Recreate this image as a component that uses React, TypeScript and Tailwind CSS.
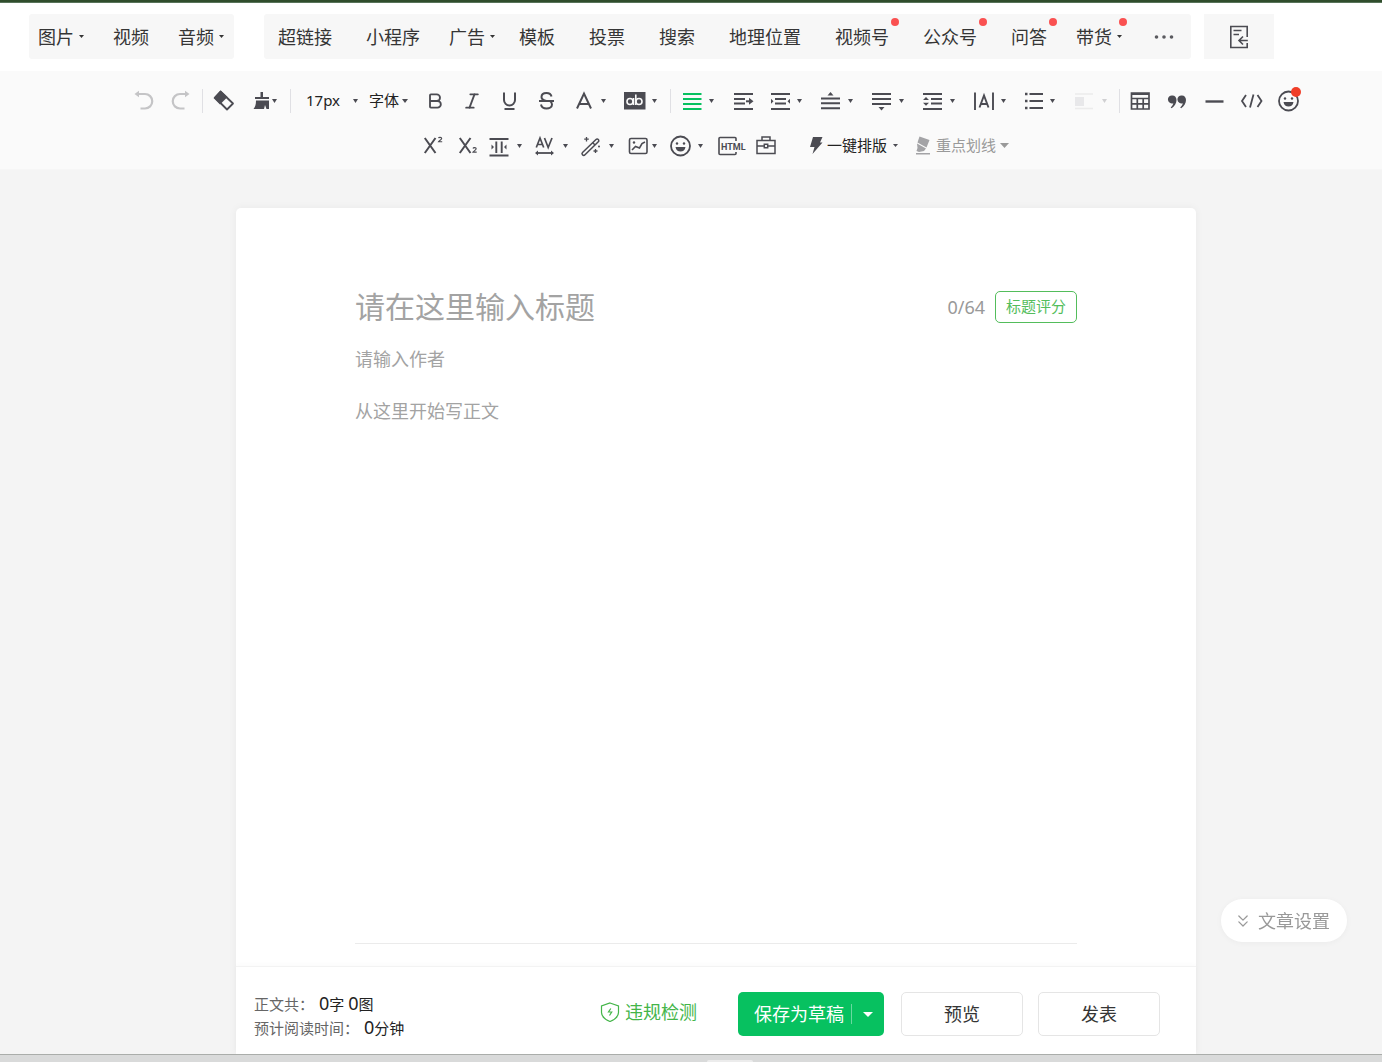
import { Bold, ChevronsDown, Italic, Strikethrough, Underline } from "lucide-react";
import { useState, type ReactNode } from "react";

interface MenuItem {
  label: string;
  className: string;
  caret?: boolean;
  dot?: boolean;
}

const mediaMenu: MenuItem[] = [
  { label: "图片", className: "pr-[39px]", caret: true },
  { label: "视频", className: "pr-[29px]" },
  { label: "音频", className: "pr-[20px]", caret: true },
];

const insertMenu: MenuItem[] = [
  { label: "超链接", className: "pr-[34px]" },
  { label: "小程序", className: "pr-[29px]" },
  { label: "广告", className: "pr-[34px]", caret: true },
  { label: "模板", className: "pr-[34px]" },
  { label: "投票", className: "pr-[34px]" },
  { label: "搜索", className: "pr-[34px]" },
  { label: "地理位置", className: "pr-[34px]" },
  { label: "视频号", className: "pr-[34px]", dot: true },
  { label: "公众号", className: "pr-[34px]", dot: true },
  { label: "问答", className: "pr-[29px]", dot: true },
  { label: "带货", className: "pr-[42px]", caret: true, dot: true },
];

function Caret({ className = "h-1 w-[5px]" }: { className?: string }) {
  return (
    <svg viewBox="0 0 10 8" preserveAspectRatio="none" className={`block shrink-0 ${className}`} fill="currentColor">
      <path d="M0 0h10L5 8z" />
    </svg>
  );
}

function MenuButton({ item }: { item: MenuItem }) {
  return (
    <button className={`h-full text-lg text-[#353535] ${item.className}`}>
      <span className="relative block whitespace-nowrap">
        {item.label}
        {item.caret && (
          <span className="absolute inset-y-0 left-full ml-[5px] flex items-center">
            <Caret className="h-[3px] w-[5px]" />
          </span>
        )}
        {item.dot && (
          <span
            className={`absolute left-full -top-[5px] size-2 rounded-full bg-[#fa5151] ${item.caret ? "ml-[7px]" : "ml-[2px]"}`}
          />
        )}
      </span>
    </button>
  );
}

function Icon({ children }: { children: ReactNode }) {
  return (
    <svg viewBox="0 0 24 24" className="size-6 shrink-0" fill="none" stroke="currentColor" strokeWidth="2">
      {children}
    </svg>
  );
}

interface ToolProps {
  title: string;
  width?: string;
  caret?: string;
  color?: string;
  children: ReactNode;
}

function Tool({ title, width = "w-[37px]", caret, color = "text-[#4b4b52]", children }: ToolProps) {
  return (
    <button title={title} aria-label={title} className={`relative flex h-11 shrink-0 items-center pl-1.5 ${width} ${color}`}>
      {children}
      {caret && (
        <span className={`${caret} ${color === "text-[#07c160]" ? "text-[#4b4b52]" : ""}`}>
          <Caret />
        </span>
      )}
    </button>
  );
}

function Divider() {
  return <span className="ml-[3px] mr-[2px] h-6 w-px shrink-0 bg-[#e0e0e4]" />;
}

function Smile() {
  return (
    <Icon>
      <circle cx="12.5" cy="12" r="9.5" strokeWidth="1.8" />
      <circle cx="9" cy="9.5" r="1.2" fill="currentColor" stroke="none" />
      <circle cx="16" cy="9.5" r="1.2" fill="currentColor" stroke="none" />
      <path d="M7.500 13h10c-.4 3-2.400 4.500-5 4.500s-4.600-1.500-5-4.500z" fill="currentColor" stroke="none" />
    </Icon>
  );
}

function TopMenu() {
  return (
    <nav className="flex bg-white pb-3 pl-[29px] pt-[11px]">
      <div className="flex h-[45px] shrink-0 items-center rounded-[3px] bg-[#f7f7f7] pl-[9px]">
        {mediaMenu.map((item) => (
          <MenuButton key={item.label} item={item} />
        ))}
      </div>
      <div className="ml-[30px] flex h-[45px] shrink-0 items-center rounded-[3px] bg-[#f7f7f7] pl-[14px] pr-[17px]">
        {insertMenu.map((item) => (
          <MenuButton key={item.label} item={item} />
        ))}
        <button aria-label="更多" className="h-full text-[#5a5a5f]">
          <svg viewBox="0 0 20 4" className="h-1 w-5" fill="currentColor">
            <circle cx="2.500" cy="2" r="1.800" />
            <circle cx="10" cy="2" r="1.800" />
            <circle cx="17.500" cy="2" r="1.800" />
          </svg>
        </button>
      </div>
      <button aria-label="导入文章" className="ml-[13px] flex h-[45px] w-[70px] shrink-0 items-center justify-center bg-[#f7f7f7] text-[#4b4b52]">
        <svg viewBox="0 0 20 24" className="h-6 w-5" fill="none" stroke="currentColor" strokeWidth="1.600">
          <path d="M18.200 12V1.500H1.800v21h16.400v-4.500M4.500 5.500h8M4.500 9.500h5.500M18.800 15.500h-9M14 11.500L10 15.500l4 4" />
        </svg>
      </button>
    </nav>
  );
}

function Toolbar() {
  return (
    <div className="flex flex-col items-center gap-px border-b border-[#f6f6f6] bg-[#fafafa] pl-[50px] pt-2">
      <div className="flex h-11 items-center">
        <Tool title="撤销" color="text-[#c4c4c6]">
          <Icon>
            <path d="M6 5h8a7 7 0 0 1 0 14.500H9.500" strokeWidth="2.200" />
            <path d="M3.500 5L8 1.800v6.400z" fill="currentColor" stroke="none" />
          </Icon>
        </Tool>
        <Tool title="重做" color="text-[#c4c4c6]">
          <Icon>
            <path d="M19 5h-7a7 7 0 0 0 0 14.500h4.500" strokeWidth="2.200" />
            <path d="M21.500 5L17 1.800v6.400z" fill="currentColor" stroke="none" />
          </Icon>
        </Tool>
        <Divider />
        <Tool title="清除格式">
          <Icon>
            <path d="M9.500 2.500L22 14.500l-6 6L4 8.500z" strokeWidth="1.800" strokeLinejoin="round" />
            <path d="M9.500 1.500l7 6.500-7.500 7.500-6.500-6.500z" fill="currentColor" stroke="none" />
          </Icon>
        </Tool>
        <Tool title="格式刷" width="w-[45px]">
          <Icon>
            <path d="M12.500 3h2.500v5h6v2H7V8h5.500zM8 11.500h13V20h-2.500l-1.500-4-1 4H5.500C7 18 8 16 8 11.500z" fill="currentColor" stroke="none" />
          </Icon>
          <Caret />
        </Tool>
        <Divider />
        <label className="relative flex w-[70px] shrink-0 items-center text-[#4b4b52]">
          <select aria-label="字号" className="-mt-0.5 w-full appearance-none bg-transparent pl-[13px] text-[15px] text-[#222]">
            <option>17px</option>
          </select>
          <Caret className="absolute right-[5px] h-1 w-[5px]" />
        </label>
        <label className="relative flex w-[54px] shrink-0 items-center text-[#4b4b52]">
          <select aria-label="字体" className="-mt-0.5 w-full appearance-none bg-transparent pl-[6px] text-[15px] text-[#222]">
            <option>字体</option>
          </select>
          <Caret className="absolute right-[9px] h-1 w-[6px]" />
        </label>
        <Tool title="加粗">
          <span className="flex w-6 justify-center"><Bold size={20} strokeWidth={2.2} /></span>
        </Tool>
        <Tool title="斜体">
          <span className="flex w-6 justify-center"><Italic size={20} strokeWidth={2.2} /></span>
        </Tool>
        <Tool title="下划线">
          <Icon>
            <path d="M7 3.500V11a5.500 5.500 0 0 0 11 0V3.500M7.500 20h10" />
          </Icon>
        </Tool>
        <Tool title="删除线">
          <Icon>
            <path d="M5 12h15M17.500 7.500c-.5-2.300-2.500-3.500-5-3.500-3 0-5 1.500-5 4 0 2 1.500 3.300 5 4M7 15.500c.5 2.500 2.500 4 5.500 4s5.500-1.500 5.500-4c0-1.500-.8-2.700-2-3.500" />
          </Icon>
        </Tool>
        <Tool title="字体颜色" width="w-[51px]" caret="ml-[6px]">
          <Icon>
            <path d="M6 19.500L13 4.500l7 15M8.500 15h9" />
          </Icon>
        </Tool>
        <Tool title="背景色" width="w-[51px]" caret="ml-[6px]">
          <Icon>
            <path d="M2 3h21.500v17.500H2z" fill="currentColor" stroke="none" />
            <circle cx="8" cy="12.500" r="3" stroke="#fafafa" strokeWidth="1.600" />
            <circle cx="17" cy="12.500" r="3" stroke="#fafafa" strokeWidth="1.600" />
            <path d="M11.500 9v7M13.800 5.500V16" stroke="#fafafa" strokeWidth="1.600" />
          </Icon>
        </Tool>
        <Divider />
        <Tool title="两端对齐" width="w-[51px]" caret="ml-[6px]" color="text-[#07c160]">
          <Icon>
            <path d="M4 5h18.500M4 10h18.500M4 15h18.500M4 20h18.500" />
          </Icon>
        </Tool>
        <Tool title="首行缩进">
          <Icon>
            <path d="M4 5h19M4 10h11M4 14.500h11M4 20h19" />
            <path d="M16 12.300h4" />
            <path d="M19 8.800l4.500 3.500-4.500 3.500z" fill="currentColor" stroke="none" />
          </Icon>
        </Tool>
        <Tool title="两端缩进" width="w-[51px]" caret="ml-[6px]">
          <Icon>
            <path d="M4 5h19M8 10h11M8 14.500h11M4 20h19" />
            <path d="M4 9.800l2.500 2.500L4 14.800zM23 9.800l-2.500 2.500 2.500 2.500z" fill="currentColor" stroke="none" />
          </Icon>
        </Tool>
        <Tool title="段前距" width="w-[51px]" caret="ml-[6px]">
          <Icon>
            <path d="M3 9.500h19M3 14.300h19M3 19.200h19" />
            <path d="M12.500 3l3 3.500h-6z" fill="currentColor" stroke="none" />
          </Icon>
        </Tool>
        <Tool title="段后距" width="w-[51px]" caret="ml-[6px]">
          <Icon>
            <path d="M3 5h19M3 10h19M3 15h19" />
            <path d="M12.500 21.500l3-3.500h-6z" fill="currentColor" stroke="none" />
          </Icon>
        </Tool>
        <Tool title="行间距" width="w-[51px]" caret="ml-[6px]">
          <Icon>
            <path d="M3 5h19M11 10h11M11 14.500h11M3 20h19" />
            <path d="M6 8l3 3H3zM6 16.800l3-3H3z" fill="currentColor" stroke="none" />
          </Icon>
        </Tool>
        <Tool title="字间距" width="w-[51px]" caret="ml-[6px]">
          <Icon>
            <path d="M4 3.500V21M22 3.500V21M8.500 18.500l4.500-12 4.500 12M10 15h6" strokeWidth="1.900" />
          </Icon>
        </Tool>
        <Tool title="列表" width="w-[51px]" caret="ml-[4px]">
          <Icon>
            <path d="M7.500 5H21M7.500 12H21M7.500 19H21" />
            <path d="M3 5h2.500M3 12h2.500M3 19h2.500" strokeWidth="2.400" />
          </Icon>
        </Tool>
        <Tool title="图片环绕" width="w-[49px]" caret="ml-[5px]" color="text-[#d0d0d2]">
          <Icon>
            <path d="M2 5h18M2 19.500h18" strokeWidth="1.600" stroke="#ececec" />
            <path d="M2 8h9v9H2z" fill="#e8e8ea" stroke="none" />
          </Icon>
        </Tool>
        <Divider />
        <Tool title="表格">
          <Icon>
            <path d="M3.500 4.200h17.500V20H3.500zM3.500 9.500h17.500M3.500 14.800h17.500M9.300 9.500V20M15.200 9.500V20" strokeWidth="1.700" />
            <path d="M3.500 5h17.500" />
          </Icon>
        </Tool>
        <Tool title="引用">
          <Icon>
            <path d="M7.500 6.500a4 4 0 1 0 .8 7.700c-.3 1.600-1.300 3-2.600 4.300l1 .8c3.100-2.300 4.800-5.300 4.800-8.300 0-2.700-1.700-4.500-4-4.500zM17 6.500a4 4 0 1 0 .8 7.700c-.3 1.600-1.300 3-2.600 4.300l1 .8c3.100-2.300 4.800-5.300 4.800-8.300 0-2.700-1.700-4.500-4-4.500z" fill="currentColor" stroke="none" />
          </Icon>
        </Tool>
        <Tool title="分割线">
          <Icon>
            <path d="M3.500 12.500h18" strokeWidth="2.400" />
          </Icon>
        </Tool>
        <Tool title="代码">
          <Icon>
            <path d="M7 6l-4 6 4 6M18.500 6l4 6-4 6M14.500 5.500L11 18.500" strokeWidth="1.800" />
          </Icon>
        </Tool>
        <Tool title="表情">
          <Smile />
          <span className="absolute right-[6px] top-2 size-[10px] rounded-full bg-[#f03e28]" />
        </Tool>
      </div>

      <div className="mb-px flex h-11 items-center">
        <Tool title="上标" width="w-[35px]">
          <Icon>
            <path d="M3.800 4L14.500 19M14.500 4L3.800 19" />
            <path d="M17.500 4.200c.3-1.200 3.200-1.200 3.200.3 0 1.300-2.500 2-3.200 3.300h3.700" strokeWidth="1.100" />
          </Icon>
        </Tool>
        <Tool title="下标" width="w-[31px]">
          <Icon>
            <path d="M3.800 4L14.500 19M14.500 4L3.800 19" />
            <path d="M17 14.500c.3-1.200 3.200-1.200 3.200.3 0 1.300-2.500 2-3.200 3.300h3.700" strokeWidth="1.100" />
          </Icon>
        </Tool>
        <Tool title="分栏" width="w-[45px]" caret="ml-[6px]">
          <Icon>
            <path d="M2.500 5h19M2.500 21.500h19M9.300 7.500v11.500M14.700 7.500v11.500" strokeWidth="1.900" />
            <path d="M4.500 10.500L7 13l-2.500 2.500zM19.500 10.500L17 13l2.500 2.500z" fill="currentColor" stroke="none" />
          </Icon>
        </Tool>
        <Tool title="字符间距" width="w-[47px]" caret="ml-[7px]">
          <Icon>
            <path d="M4.300 13.500L8 4l3.700 9.500M5.500 10.500h5M12.500 4l3.700 9.500L20 4" strokeWidth="1.700" />
            <path d="M4 19h17" strokeWidth="1.800" />
            <path d="M3 19l3-2.500v5zM22 19l-3-2.500v5z" fill="currentColor" stroke="none" />
          </Icon>
        </Tool>
        <Tool title="魔法棒" width="w-[47px]" caret="ml-[6px]">
          <Icon>
            <path d="M3.500 18.500L17 5.500a1.500 1.500 0 0 1 2.300 2.300L6 20.800a1.600 1.600 0 0 1-2.500-2.300zM13.500 8.500l2.300 2.300" strokeWidth="1.500" />
            <path d="M7.500 3v4.500M5.200 5.200h4.600M16.500 15v4M14.500 17h4" strokeWidth="1.300" />
            <circle cx="20" cy="12.500" r="1" fill="currentColor" stroke="none" />
          </Icon>
        </Tool>
        <Tool title="图表" width="w-[42px]" caret="ml-[2px]">
          <Icon>
            <rect x="3.500" y="4.500" width="17.500" height="15" rx="1.500" strokeWidth="1.600" />
            <path d="M6 16l3.500-3.500 4 1.500 2.500-4.500 3-1.500" strokeWidth="1.600" />
            <circle cx="8" cy="8.500" r="1.200" fill="currentColor" stroke="none" />
          </Icon>
        </Tool>
        <Tool title="表情包" width="w-[50px]" caret="ml-[6px]">
          <Smile />
        </Tool>
        <Tool title="源代码" width="w-[36px]">
          <svg viewBox="0 0 28 24" className="h-6 w-7 shrink-0 overflow-visible" fill="none" stroke="currentColor" strokeWidth="1.600">
            <path d="M18 7V4.500a1 1 0 0 0-1-1H2a1 1 0 0 0-1 1v15a1 1 0 0 0 1 1h15a1 1 0 0 0 1-1V18" />
            <text x="3" y="15.500" fontSize="9" fontWeight="700" fill="currentColor" stroke="none" fontFamily="Roboto, sans-serif">HTML</text>
          </svg>
        </Tool>
        <Tool title="工具箱" width="w-[36px]">
          <Icon>
            <path d="M3 6.500h18V19.500H3zM8 6.500V3h8v3.500M3 12h7M14 12h7M10.300 10.300h3.400v3.500h-3.400z" strokeWidth="1.500" />
          </Icon>
        </Tool>
        <button className="flex h-11 w-[122px] shrink-0 items-center pb-0.5 pl-6 text-[15px] text-[#222]">
          <svg viewBox="0 0 16 20" className="mr-[3px] h-5 w-4 shrink-0 text-[#4b4b52]" fill="currentColor">
            <path d="M5 2h9.500L12 7.500h2.500L4.500 19 6.500 12H2z" />
          </svg>
          一键排版
          <Caret className="ml-[6px] h-[3px] w-[5px] text-[#4b4b52]" />
        </button>
        <button className="flex h-11 w-[111px] shrink-0 items-center pb-0.5 pl-2 text-[15px] text-[#999]">
          <svg viewBox="0 0 18 20" className="mr-1 h-5 w-[18px] shrink-0 text-[#a3a3a6]" fill="currentColor">
            <path d="M5.500 1.500l10 3.500-3 7.500-9-5zM3 8.500l9 5-2 2.500-5 1-2.500-1 1-3zM2 18h14v1.500H2z" />
          </svg>
          重点划线
          <Caret className="ml-1 h-[5px] w-[9px]" />
        </button>
      </div>
    </div>
  );
}

export default function App() {
  const [title, setTitle] = useState("");
  const [author, setAuthor] = useState("");
  const [body, setBody] = useState("");

  return (
    <div className="flex min-h-screen flex-col bg-[#f4f4f4] font-['Noto_Sans','Noto_Sans_CJK_SC',sans-serif] font-normal">
      <div className="h-[3px] border-b border-[#58745a] bg-[#304d2c]" />
      <TopMenu />
      <Toolbar />

      <main className="flex flex-1 flex-col pl-[50px] pt-[38px]">
        <div className="mx-auto flex w-full max-w-[960px] flex-1 flex-col rounded-t-[5px] bg-white shadow-[0_0_8px_rgba(0,0,0,0.05)]">
          <section className="mx-[119px] flex flex-1 flex-col border-b border-[#ebebeb] pt-[76px]">
            <div className="flex h-[46px] items-center">
              <input
                aria-label="标题"
                className="min-w-0 flex-1 bg-transparent text-3xl text-[#353535] outline-none placeholder:text-[#a3a3a3]"
                placeholder="请在这里输入标题"
                value={title}
                maxLength={64}
                onChange={(e) => setTitle(e.target.value)}
              />
              <span className="mr-[10px] text-lg text-[#999]">{title.length}/64</span>
              <button className="h-8 w-[82px] rounded-[5px] border border-[#53bd5b] pb-0.5 text-[15px] text-[#53bd5b]">
                标题评分
              </button>
            </div>
            <input
              aria-label="作者"
              className="mt-[15px] h-7 bg-transparent text-lg text-[#353535] outline-none placeholder:text-[#a3a3a3]"
              placeholder="请输入作者"
              value={author}
              onChange={(e) => setAuthor(e.target.value)}
            />
            <textarea
              aria-label="正文"
              className="mt-6 flex-1 resize-none bg-transparent text-lg text-[#353535] outline-none placeholder:text-[#a3a3a3]"
              placeholder="从这里开始写正文"
              value={body}
              onChange={(e) => setBody(e.target.value)}
            />
          </section>

          <footer className="mt-[22px] flex h-[88px] items-start border-t border-[#f3f3f3] pl-[18px] pr-9 pt-[25px] shadow-[0_-2px_4px_rgba(0,0,0,0.02)]">
            <div className="-mt-px text-[15px] text-[#222]">
              <p className="flex h-6 items-baseline whitespace-pre leading-6">
                <span className="mr-[5px] text-[#666]">正文共：</span>
                <span className="text-lg leading-6">{body.length}</span>字 <span className="text-lg leading-6">0</span>图
              </p>
              <p className="flex h-6 items-baseline leading-6">
                <span className="mr-[5px] text-[#666]">预计阅读时间：</span>
                <span className="text-lg leading-6">0</span>分钟
              </p>
            </div>
            <button className="ml-auto mr-[41px] flex h-10 items-center gap-[5px] text-lg text-[#44b549]">
              <svg viewBox="0 0 20 20" className="size-5" fill="none" stroke="currentColor" strokeWidth="1.200">
                <path d="M10 1l8.500 3v6.500c0 4-3.500 7-8.500 9-5-2-8.500-5-8.500-9V4z" />
                <path d="M10.800 6.500L8.500 10h3.200L9.500 13.500" />
              </svg>
              违规检测
            </button>
            <div className="mr-[17px] flex h-11 w-[146px] items-center rounded-[5px] bg-[#07c160] text-white">
              <button className="h-full flex-1 pl-4 text-left text-lg">保存为草稿</button>
              <button aria-label="更多保存选项" className="flex h-5 w-[33px] items-center justify-center border-l border-[#6ad9a0]">
                <Caret className="h-[5px] w-[10px]" />
              </button>
            </div>
            <button className="mr-[15px] h-11 w-[122px] rounded-[5px] border border-[#e5e5e5] text-lg text-[#353535]">预览</button>
            <button className="h-11 w-[122px] rounded-[5px] border border-[#e5e5e5] text-lg text-[#353535]">发表</button>
          </footer>
        </div>
      </main>

      <button className="fixed bottom-[120px] right-[35px] flex h-[43px] w-[126px] items-center rounded-full bg-white pl-3 text-lg text-[#999] shadow-[0_1px_6px_rgba(0,0,0,0.04)]">
        <ChevronsDown size={20} strokeWidth={1.5} className="mr-[5px]" />
        文章设置
      </button>

      <div className="flex h-2 items-end justify-center border-t border-[#aaadaa] bg-[#d9dada] pl-[78px]">
        <span className="h-[2px] w-[46px] rounded-t-[2px] bg-[#ececec]" />
      </div>
    </div>
  );
}
